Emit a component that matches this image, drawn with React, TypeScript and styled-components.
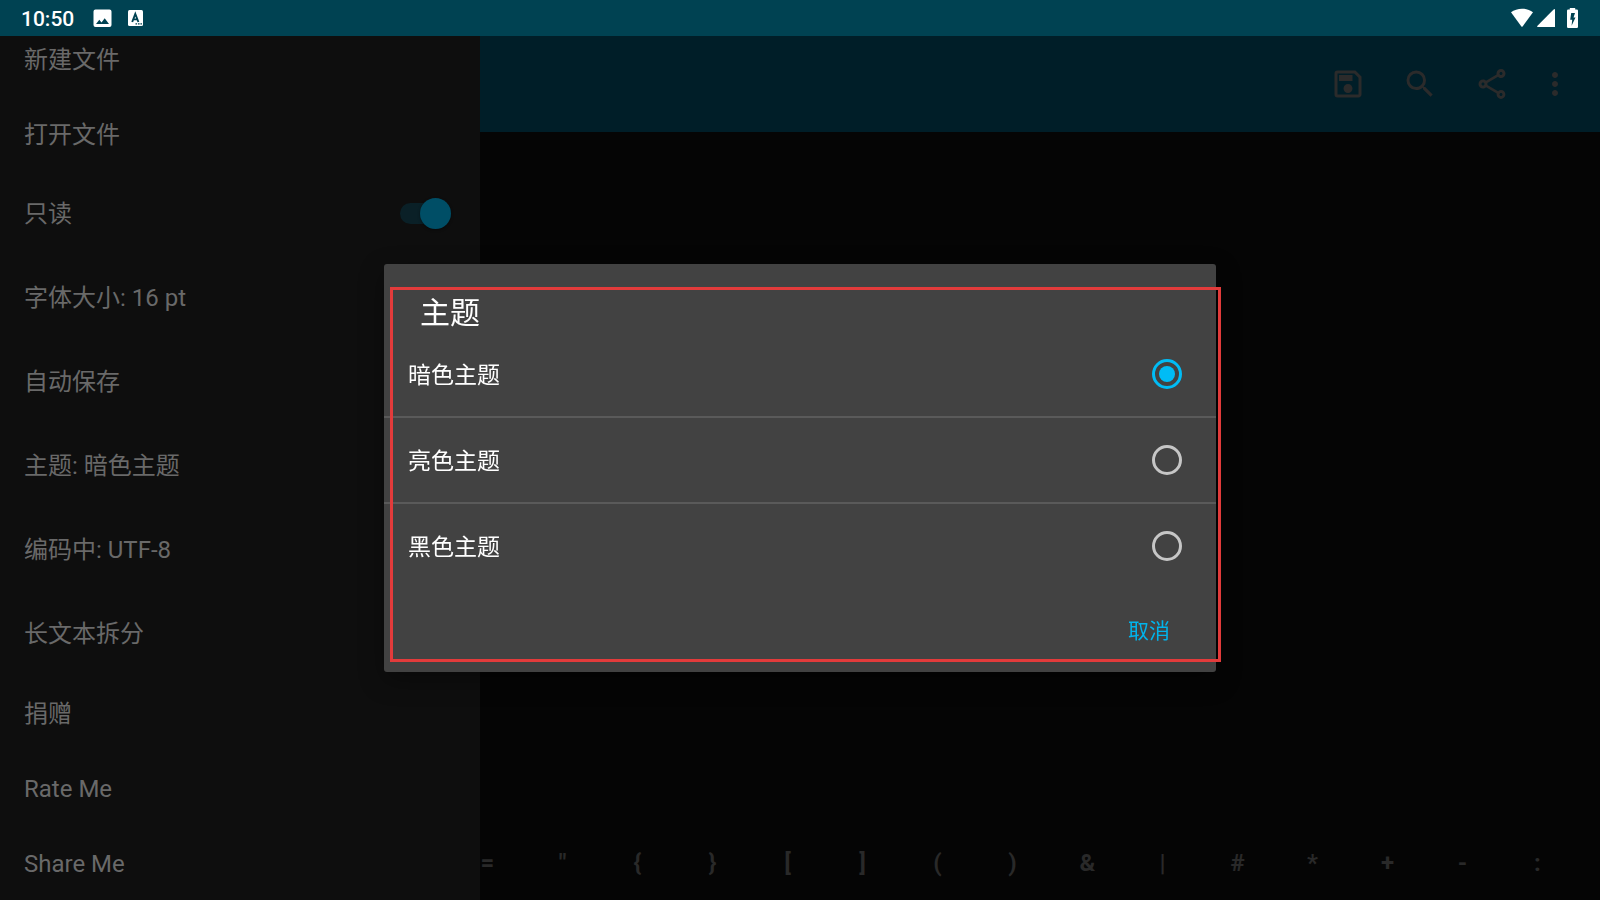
import React, { useState } from "react";
import styled, { createGlobalStyle } from "styled-components";
import { MdOutlineSave, MdSearch, MdOutlineShare, MdMoreVert } from "react-icons/md";

const GlobalStyle = createGlobalStyle`
  * { box-sizing: border-box; }
  body {
    margin: 0;
    background: #050505;
    font-family: Roboto, "Noto Sans CJK SC", sans-serif;
  }
  button {
    font-family: inherit;
    margin: 0;
    padding: 0;
    border: 0;
    background: none;
    cursor: pointer;
  }
`;

const Screen = styled.div`
  display: flex;
  flex-direction: column;
  height: 100vh;
  overflow: hidden;
`;

const StatusBar = styled.header`
  display: flex;
  flex: none;
  align-items: center;
  height: 36px;
  padding: 0 18px 0 21px;
  background: #004252;
  color: #fff;
`;

const Clock = styled.time`
  flex: none;
  width: 71px;
  padding-top: 2px;
  font-size: 21px;
  font-weight: 500;
  line-height: 24px;
`;

const StatusIcons = styled.div<{ $gap: number; $end?: boolean }>`
  display: flex;
  align-items: center;
  gap: ${(p) => p.$gap}px;
  margin-left: ${(p) => (p.$end ? "auto" : "0")};
`;

const Body = styled.div`
  display: flex;
  flex: 1;
  min-height: 0;
`;

const Drawer = styled.nav`
  display: flex;
  flex: none;
  flex-direction: column;
  justify-content: flex-end;
  width: 30%;
  overflow: hidden;
  background: #0e0e0e;
`;

const DrawerItem = styled.button<{ $tall?: boolean }>`
  display: flex;
  flex: none;
  align-items: center;
  height: ${(p) => (p.$tall ? 84 : 75)}px;
  padding: 2px 24px 0;
  color: #696969;
  font-size: 24px;
  line-height: 30px;
  text-align: left;
`;

const DrawerToggle = styled.label`
  display: flex;
  flex: none;
  align-items: center;
  justify-content: space-between;
  height: 84px;
  padding: 2px 28px 0 24px;
  color: #696969;
  font-size: 24px;
  line-height: 30px;
`;

const Switch = styled.input`
  position: relative;
  appearance: none;
  width: 52px;
  height: 32px;
  margin: 0;

  &::before {
    content: "";
    position: absolute;
    inset: 5px 6px 6px 0;
    border-radius: 11px;
    background: #0a2027;
  }
  &::after {
    content: "";
    position: absolute;
    top: 0;
    left: 0;
    width: 31px;
    height: 31px;
    border-radius: 50%;
    background: #444;
    box-shadow: 0 1px 3px rgba(0, 0, 0, 0.4);
  }
  &:checked::after {
    left: 20px;
    background: #004e66;
  }
`;

const Editor = styled.main`
  display: flex;
  flex: 1;
  flex-direction: column;
  min-width: 0;
  overflow: hidden;
  background: #050505;
`;

const Toolbar = styled.div`
  display: flex;
  flex: none;
  justify-content: flex-end;
  height: 96px;
  padding-right: 18px;
  background: #001e28;
`;

const ToolButton = styled.button<{ $narrow?: boolean }>`
  display: grid;
  place-items: center;
  width: ${(p) => (p.$narrow ? 54 : 72)}px;
  color: #2b2b2b;
`;

const SymbolBar = styled.div`
  display: flex;
  justify-content: flex-end;
  height: 74px;
  margin-top: auto;
  padding-right: 25px;
`;

const SymbolKey = styled.button`
  flex: none;
  width: 75px;
  color: #292929;
  font-size: 24px;
  font-weight: 700;
`;

const Overlay = styled.div`
  position: fixed;
  inset: 36px 0 0;
  display: grid;
  place-items: center;
`;

const Dialog = styled.section`
  position: relative;
  width: 52%;
  border-radius: 3px;
  background: #424242;
  box-shadow: 0 8px 24px rgba(0, 0, 0, 0.35);
`;

const DialogTitle = styled.h2`
  margin: 0;
  padding: 29px 36px 0;
  color: #fff;
  font-size: 30px;
  font-weight: 400;
  line-height: 39px;
`;

const Option = styled.label`
  display: flex;
  align-items: center;
  justify-content: space-between;
  height: 84px;
  padding: 0 34px 0 24px;
  color: #fff;
  font-size: 23px;
  line-height: 30px;

  & + & {
    height: 86px;
    border-top: 2px solid #5a5a5a;
  }
`;

const OptionText = styled.span`
  padding-top: 3px;
`;

const Radio = styled.input`
  display: grid;
  place-items: center;
  appearance: none;
  width: 30px;
  height: 30px;
  margin: 0;
  border: 3px solid #c6c6c6;
  border-radius: 50%;

  &:checked {
    border-color: #00bcf5;
  }
  &:checked::before {
    content: "";
    width: 16px;
    height: 16px;
    border-radius: 50%;
    background: #00bcf5;
  }
`;

const Actions = styled.div`
  display: flex;
  align-items: center;
  justify-content: flex-end;
  height: 84px;
  padding-right: 35px;
`;

const CancelButton = styled.button`
  height: 54px;
  padding: 2px 11px 0;
  color: #00b4ec;
  font-size: 21px;
  line-height: 30px;
`;

const Highlight = styled.div`
  position: absolute;
  inset: 23px -5px 10px 6px;
  border: 3px solid #e23b3b;
  pointer-events: none;
`;

const symbols = ["=", '"', "{", "}", "[", "]", "(", ")", "&", "|", "#", "*", "+", "-", ":"];
const themes = ["暗色主题", "亮色主题", "黑色主题"];

export default function App() {
  const [readOnly, setReadOnly] = useState(true);
  const [theme, setTheme] = useState(themes[0]);

  return (
    <Screen>
      <GlobalStyle />
      <StatusBar>
        <Clock>10:50</Clock>
        <StatusIcons $gap={16}>
          <svg width="20" height="20" viewBox="0 0 20 20" aria-hidden="true">
            <path
              fill="#fff"
              fillRule="evenodd"
              d="M3.5 1.5h14a2 2 0 0 1 2 2v13.500a2 2 0 0 1-2 2h-14a2 2 0 0 1-2-2V3.500a2 2 0 0 1 2-2zM4 16h13l-4.300-5.700-3.200 4.100L7.300 11.800z"
            />
          </svg>
          <svg width="16" height="18" viewBox="0 0 16 18" aria-hidden="true">
            <rect y="1" width="15" height="16" rx="1.500" fill="#fff" />
            <path
              fill="none"
              stroke="#004252"
              strokeWidth="1.900"
              d="M4.200 13L7.300 5L10.400 13M5.300 10.400h4"
            />
            <path fill="#004252" d="M7.500 14.200h1.600v1.300H7.500zM10 14.200h1.600v1.300H10zM12.400 14.200H14v1.300h-1.600z" />
          </svg>
        </StatusIcons>
        <StatusIcons $gap={4} $end>
          <svg width="22" height="20" viewBox="0 0 22 20" aria-hidden="true">
            <path fill="#fff" d="M0 4.300C6-.6 16-.6 22 4.300L11.600 18.400q-.6.700-1.200 0z" />
          </svg>
          <svg width="18" height="20" viewBox="0 0 18 20" aria-hidden="true">
            <path fill="#fff" d="M18 1.500V19H1Q-.7 19 .5 17.700L16.600 1.600Q18 .5 18 1.500z" />
          </svg>
          <svg width="23" height="22" viewBox="2 0 23 22" aria-hidden="true">
            <path
              fill="#fff"
              fillRule="evenodd"
              d="M11.200 2.500h1.600V1h5.400v1.500h1.600a1.200 1.200 0 0 1 1.200 1.200v16.100a1.200 1.200 0 0 1-1.200 1.200h-8.600A1.200 1.200 0 0 1 10 19.800V3.700a1.200 1.200 0 0 1 1.200-1.200zM14.200 6l-1 6.800h2l-.6 6 3.900-8.200h-2L18 6z"
            />
          </svg>
        </StatusIcons>
      </StatusBar>

      <Body>
        <Drawer>
          <DrawerItem>新建文件</DrawerItem>
          <DrawerItem>打开文件</DrawerItem>
          <DrawerToggle>
            只读
            <Switch
              type="checkbox"
              checked={readOnly}
              onChange={(e) => setReadOnly(e.target.checked)}
            />
          </DrawerToggle>
          <DrawerItem $tall>字体大小: 16 pt</DrawerItem>
          <DrawerItem $tall>自动保存</DrawerItem>
          <DrawerItem $tall>主题: {theme}</DrawerItem>
          <DrawerItem $tall>编码中: UTF-8</DrawerItem>
          <DrawerItem $tall>长文本拆分</DrawerItem>
          <DrawerItem>捐赠</DrawerItem>
          <DrawerItem>Rate Me</DrawerItem>
          <DrawerItem>Share Me</DrawerItem>
        </Drawer>

        <Editor>
          <Toolbar>
            <ToolButton aria-label="保存">
              <MdOutlineSave size={36} />
            </ToolButton>
            <ToolButton aria-label="搜索">
              <MdSearch size={36} />
            </ToolButton>
            <ToolButton aria-label="分享">
              <MdOutlineShare size={36} />
            </ToolButton>
            <ToolButton $narrow aria-label="更多">
              <MdMoreVert size={36} />
            </ToolButton>
          </Toolbar>
          <SymbolBar>
            {symbols.map((s) => (
              <SymbolKey key={s}>{s}</SymbolKey>
            ))}
          </SymbolBar>
        </Editor>
      </Body>

      <Overlay>
        <Dialog role="dialog" aria-labelledby="theme-title">
          <DialogTitle id="theme-title">主题</DialogTitle>
          {themes.map((name) => (
            <Option key={name}>
              <OptionText>{name}</OptionText>
              <Radio
                type="radio"
                name="theme"
                checked={theme === name}
                onChange={() => setTheme(name)}
              />
            </Option>
          ))}
          <Actions>
            <CancelButton>取消</CancelButton>
          </Actions>
          <Highlight />
        </Dialog>
      </Overlay>
    </Screen>
  );
}
